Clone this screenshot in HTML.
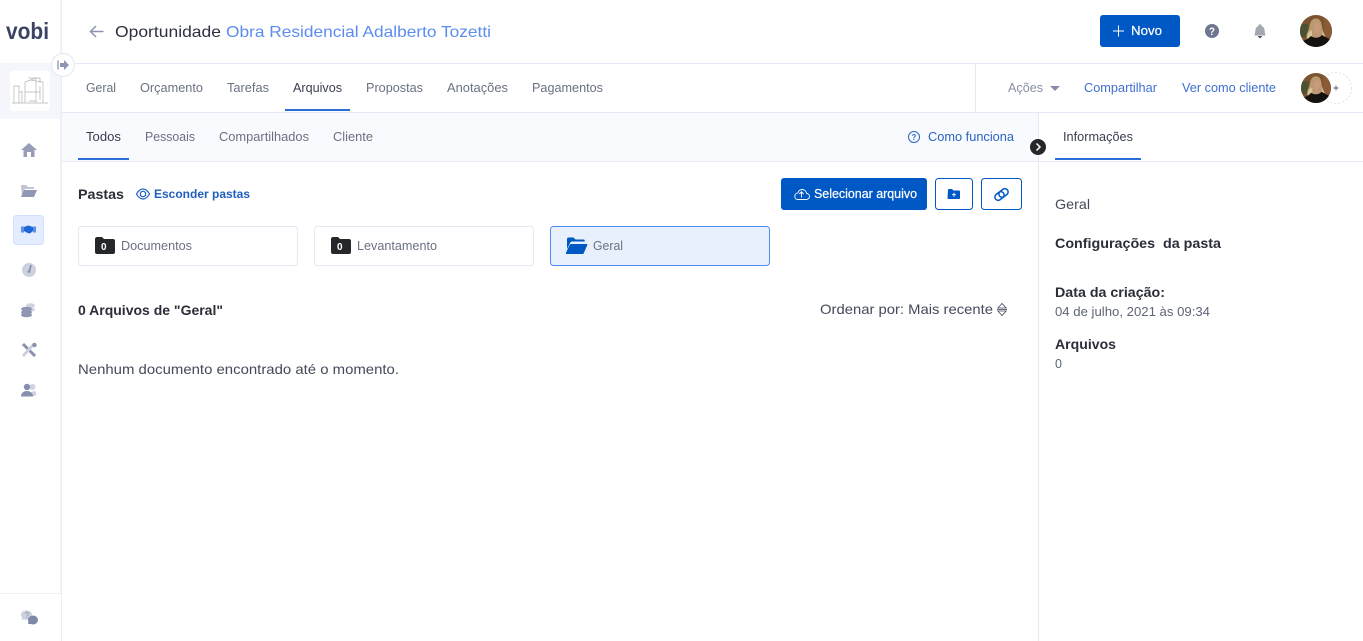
<!DOCTYPE html>
<html lang="pt-BR"><head><meta charset="utf-8"><title>Vobi</title>
<style>
html,body{margin:0;padding:0;background:#fff;width:1363px;height:641px;overflow:hidden}
svg{display:block;position:absolute;left:0;top:0}
text{font-family:"Liberation Sans",sans-serif;font-size:13px;fill:#6a7182;white-space:pre}
.b{font-weight:700;fill:#2b2d38;font-size:14px}
.a{fill:#3f6fd0}
.d{fill:#3a3f50}
.l{fill:#2a64c4}
.w{fill:#fff;stroke:#fff;stroke-width:.2px}
</style></head><body>
<svg width="1363" height="641" viewBox="0 0 1363 641" xmlns="http://www.w3.org/2000/svg" xmlns:xlink="http://www.w3.org/1999/xlink">
<defs>
<clipPath id="av"><circle cx="16" cy="16" r="16"/></clipPath>
<symbol id="avatar" viewBox="0 0 32 32">
<g clip-path="url(#av)">
<rect width="32" height="32" fill="#7b5330"/>
<rect x="0" y="9" width="8" height="13" fill="#4a5233"/>
<rect x="24" y="2" width="8" height="20" fill="#8a5b35"/>
<path d="M16 3.500c-4.500 0-6 4-6.500 8-.5 4-3.500 7-3 11 .5 3 4 4 6 2l8-1c2 2 4.500 1 4-2-.5-4-2-6-2.500-10-.5-4.500-2-8-6-8z" fill="#b99a6c"/>
<path d="M8 18c-1 3-1 5 1 7l3-1 0-9zM22 15l1 9 2-1c.5-3-1.500-5-3-8z" fill="#d8c296"/>
<ellipse cx="17" cy="12.500" rx="3.500" ry="5" fill="#c99a7e"/>
<path d="M0 25c4 2 8-1 11-4 3 2.500 8 2.500 11-1 3 2 7 4 10 5v7H0z" fill="#14110f"/>
<path d="M14.500 17h5v4c-1.500 1.500-3.500 1.500-5 0z" fill="#c2957c"/>
</g>
</symbol>
</defs>

<!-- Background panels -->
<rect x="62" y="113" width="976" height="48" fill="#f9fafd"/>
<rect x="0" y="63" width="61" height="56" fill="#f5f6fc"/>
<rect x="10" y="71" width="40" height="40" rx="3" fill="#fff"/>
<!-- Lines -->
<rect x="60" y="0" width="1" height="593" fill="#f3f4f8"/>
<rect x="61" y="0" width="1" height="641" fill="#ebedf5"/>
<rect x="62" y="63" width="1301" height="1" fill="#e4e8f4"/>
<rect x="62" y="112" width="1301" height="1" fill="#e4e8f4"/>
<rect x="975" y="64" width="1" height="48" fill="#e4e8f4"/>
<rect x="62" y="161" width="1301" height="1" fill="#e8ebf5"/>
<rect x="1038" y="113" width="1" height="528" fill="#e4e8f4"/>
<rect x="0" y="593" width="61" height="1" fill="#eeeff5"/>

<!-- Logo -->
<text x="6" y="39" textLength="43" lengthAdjust="spacingAndGlyphs" style="font-size:23px;font-weight:700;fill:#3b4463">vobi</text>

<!-- Project illustration -->
<g fill="none" stroke="#b2b5ba" stroke-width=".7">
<path d="M14 103V86h5v17M19 93l3-2v12M25 103V82l11-4v25M30 80l13 2v21M25 92h15M36 88v13H29M40 86v14M12 103h36"/>
<path d="M28 78h12v5"/>
</g>
<!-- Sidebar toggle -->
<circle cx="63" cy="65" r="11.500" fill="#fff" stroke="#e2e6f4"/>
<path d="M58 60.500v9" stroke="#8d95b0" stroke-width="1.300"/>
<path d="M60 63h4v-3l5 5-5 5v-3h-4z" fill="#8d95b0"/>

<!-- Sidebar icons -->
<path d="M21 150l8-7 8 7h-2.500v7h-3.500v-5h-4v5h-3.500v-7z" fill="#979db5"/>
<path d="M21 185h5l2 2h6v2h-9l-3 7z" fill="#c0c4d3"/>
<path d="M24 190h13l-3 7H21z" fill="#8f97b2"/>
<rect x="13.500" y="215.500" width="30" height="29" rx="3" fill="#e4edff" stroke="#d2e1ff"/>
<path d="M21 226.500h3v6h-3zM33 226.500h3v6h-3z" fill="#5d8fe8"/>
<path d="M24 227l4-1.500 2 .5 3 1v4l-3 2.500-2.500-.5-3.500-2z" fill="#1f66d6"/>
<circle cx="29" cy="270" r="7" fill="#cdd1de"/>
<path d="M29.500 271l1.500-6" stroke="#7c84a0" stroke-width="1.500"/>
<circle cx="29" cy="271.500" r="1.500" fill="#8f97b2"/>
<ellipse cx="30.500" cy="305.500" rx="4.500" ry="2.200" fill="#d0d3df"/>
<ellipse cx="30.500" cy="309.500" rx="4.500" ry="2.200" fill="#d0d3df"/>
<ellipse cx="26.500" cy="309" rx="5.500" ry="2.300" fill="#8f97b2"/>
<ellipse cx="26.500" cy="312.300" rx="5.500" ry="2.300" fill="#8f97b2"/>
<ellipse cx="26.500" cy="315" rx="5.500" ry="2.300" fill="#8f97b2"/>
<path d="M23 344l12 12" stroke="#8790ac" stroke-width="3"/>
<path d="M34 344l-11 12" stroke="#cdd1de" stroke-width="3"/>
<circle cx="34.500" cy="345" r="2.200" fill="#8790ac"/>
<circle cx="32.500" cy="387" r="3" fill="#d0d3df"/>
<path d="M30 396c0-3 2-5 5-5 1.500 1 1.500 4 .5 5z" fill="#d0d3df"/>
<circle cx="27" cy="387" r="3.200" fill="#8790ac"/>
<path d="M21 396.500c0-3.500 2.500-5.500 6-5.500s6 2 6 5.500z" fill="#8790ac"/>
<ellipse cx="26.500" cy="615" rx="5.500" ry="4.800" fill="#cdd1de"/>
<path d="M22.500 618l-1.500 2 4-1z" fill="#cdd1de"/>
<text x="24.800" y="618" style="font-size:8px;fill:#8790ac">?</text>
<ellipse cx="33" cy="620" rx="5" ry="4.500" fill="#7f88a6"/>
<path d="M29 619l-1 5h6z" fill="#7f88a6"/>

<!-- Header -->
<path d="M103.500 31.500H91M96 26l-5.500 5.500L96 37" fill="none" stroke="#8d94ae" stroke-width="1.500"/>
<text x="115" y="37" textLength="106" lengthAdjust="spacingAndGlyphs" style="font-size:16px;fill:#2c3040">Oportunidade</text>
<text x="226" y="37" textLength="265" lengthAdjust="spacingAndGlyphs" style="font-size:16px;fill:#5b8def">Obra Residencial Adalberto Tozetti</text>
<rect x="1100" y="15" width="80" height="32" rx="3" fill="#0058c4"/>
<path d="M1118.500 25.500v11M1113 31h11" stroke="#fff" stroke-width="1"/>
<text x="1131" y="35" textLength="31" lengthAdjust="spacingAndGlyphs" class="w" style="font-size:13px">Novo</text>
<circle cx="1212" cy="31" r="7" fill="#6e7790"/>
<text x="1209" y="35" textLength="6" lengthAdjust="spacingAndGlyphs" style="font-size:11px;font-weight:700;fill:#fff">?</text>
<path d="M1254 35.500c1.500-1.500 1-4 1.500-6 .4-2 1.500-3 3-3.500v-1.500h3v1.500c1.500.5 2.600 1.500 3 3.500.5 2 0 4.500 1.500 6z" fill="#a3a7af"/>
<path d="M1257.500 36h5l-2.500 2.500z" fill="#50535b"/>
<use xlink:href="#avatar" href="#avatar" x="1300" y="15" width="32" height="32"/>

<!-- Main tabs -->
<text x="86" y="92" textLength="30" lengthAdjust="spacingAndGlyphs">Geral</text>
<text x="140" y="92" textLength="63" lengthAdjust="spacingAndGlyphs">Orçamento</text>
<text x="227" y="92" textLength="42" lengthAdjust="spacingAndGlyphs">Tarefas</text>
<text x="293" y="92" textLength="49" lengthAdjust="spacingAndGlyphs" class="d">Arquivos</text>
<rect x="285" y="109" width="65" height="2" fill="#2a6fd8"/>
<text x="366" y="92" textLength="57" lengthAdjust="spacingAndGlyphs">Propostas</text>
<text x="447" y="92" textLength="61" lengthAdjust="spacingAndGlyphs">Anotações</text>
<text x="532" y="92" textLength="71" lengthAdjust="spacingAndGlyphs">Pagamentos</text>
<text x="1008" y="92" textLength="35" lengthAdjust="spacingAndGlyphs" style="fill:#8a90a3">Ações</text>
<path d="M1050 86h10l-5 5z" fill="#858dab"/>
<text x="1084" y="92" textLength="73" lengthAdjust="spacingAndGlyphs" class="a">Compartilhar</text>
<text x="1182" y="92" textLength="94" lengthAdjust="spacingAndGlyphs" class="a">Ver como cliente</text>
<circle cx="1336" cy="88" r="15.500" fill="#fff" stroke="#dfe2ea" stroke-dasharray="2 2"/>
<use xlink:href="#avatar" href="#avatar" x="1301" y="73" width="30" height="30"/>
<path d="M1336 85.500v5M1333.500 88h5" stroke="#555b6c" stroke-width=".9"/>

<!-- Sub tabs -->
<text x="86" y="141" textLength="35" lengthAdjust="spacingAndGlyphs" class="d">Todos</text>
<rect x="78" y="158" width="51" height="2" fill="#2a6fd8"/>
<text x="145" y="141" textLength="50" lengthAdjust="spacingAndGlyphs">Pessoais</text>
<text x="219" y="141" textLength="90" lengthAdjust="spacingAndGlyphs">Compartilhados</text>
<text x="333" y="141" textLength="40" lengthAdjust="spacingAndGlyphs">Cliente</text>
<circle cx="914" cy="137" r="5.500" fill="none" stroke="#2a64c4" stroke-width="1"/>
<text x="911.800" y="140" textLength="4.500" lengthAdjust="spacingAndGlyphs" style="font-size:8px;font-weight:700;fill:#2a64c4">?</text>
<text x="928" y="141" textLength="86" lengthAdjust="spacingAndGlyphs" class="l">Como funciona</text>
<circle cx="1038" cy="147" r="8" fill="#26272b"/>
<path d="M1036.500 143.500l3.500 3.500-3.500 3.500" fill="none" stroke="#fff" stroke-width="1.500"/>
<text x="1063" y="141" textLength="70" lengthAdjust="spacingAndGlyphs" class="d">Informações</text>
<rect x="1055" y="158" width="86" height="2" fill="#2a6fd8"/>

<!-- Pastas -->
<text x="78" y="199" textLength="46" lengthAdjust="spacingAndGlyphs" class="b">Pastas</text>
<path d="M136.500 194c2-3.500 4.300-5 6.500-5s4.500 1.500 6.500 5c-2 3.500-4.300 5-6.500 5s-4.500-1.500-6.500-5z" fill="none" stroke="#1f5fbf" stroke-width="1.200"/>
<circle cx="143" cy="194" r="2.700" fill="none" stroke="#1f5fbf" stroke-width="1.200"/>
<text x="154" y="198" textLength="96" lengthAdjust="spacingAndGlyphs" style="font-size:12px;font-weight:700;fill:#1f5fbf">Esconder pastas</text>
<rect x="781" y="178" width="146" height="32" rx="3" fill="#0058c4"/>
<path d="M797 199.500h9c2 0 3.500-1.300 3.500-3 0-1.600-1.200-2.800-2.800-3-.5-2.400-2.300-4-4.500-4-2 0-3.800 1.300-4.300 3.400-1.700.2-3.100 1.500-3.100 3.200 0 1.900 1 3.400 2.700 3.400z" fill="none" stroke="#fff" stroke-width=".9"/>
<path d="M801.500 197.500v-5.500M799.300 194l2.200-2.200 2.200 2.200" fill="none" stroke="#fff" stroke-width=".9"/>
<text x="814" y="198" textLength="103" lengthAdjust="spacingAndGlyphs" class="w" style="font-size:12.500px">Selecionar arquivo</text>
<rect x="935.500" y="178.500" width="37" height="31" rx="3" fill="#fff" stroke="#0058c4"/>
<path d="M948 190c0-.6.400-1 1-1h3l1.500 1.500h5.500c.6 0 1 .4 1 1v6.500c0 .6-.4 1-1 1h-10.500c-.6 0-1-.4-1-1z" fill="#0058c4"/>
<path d="M954 192.700v4M952 194.700h4" stroke="#fff" stroke-width=".9"/>
<rect x="981.500" y="178.500" width="40" height="31" rx="3" fill="#fff" stroke="#0058c4"/>
<g fill="none" stroke="#0058c4" stroke-width="1.500" transform="rotate(-38 1001.500 194.500)">
<rect x="994" y="191.200" width="10" height="6.500" rx="3.250"/>
<rect x="999" y="191.300" width="10" height="6.500" rx="3.250"/>
</g>

<!-- Folder cards -->
<rect x="78.500" y="226.500" width="219" height="39" rx="3" fill="#fff" stroke="#e4e8f4"/>
<rect x="314.500" y="226.500" width="219" height="39" rx="3" fill="#fff" stroke="#e4e8f4"/>
<rect x="550.500" y="226.500" width="219" height="39" rx="3" fill="#e9f0fd" stroke="#4f8cf0"/>
<path d="M95 239c0-1 .8-2 2-2h5l2 2h9c1.200 0 2 .8 2 2v11c0 1.200-.8 2-2 2H97c-1.200 0-2-.8-2-2z" fill="#26272b"/>
<text x="101" y="250" style="font-size:10px;font-weight:700;fill:#fff">0</text>
<text x="121" y="250" textLength="71" lengthAdjust="spacingAndGlyphs">Documentos</text>
<path d="M331 239c0-1 .8-2 2-2h5l2 2h9c1.200 0 2 .8 2 2v11c0 1.200-.8 2-2 2h-16c-1.200 0-2-.8-2-2z" fill="#26272b"/>
<text x="337" y="250" style="font-size:10px;font-weight:700;fill:#fff">0</text>
<text x="357" y="250" textLength="80" lengthAdjust="spacingAndGlyphs">Levantamento</text>
<path d="M567 239c0-.8.600-1.500 1.500-1.500h5l2 2h8c.8 0 1.300.5 1.300 1.300v.7h-12.500c-1 0-1.800.5-2.300 1.500l-3 6z" fill="#0058c4"/>
<path d="M571 244h15.500c.8 0 1 .5.700 1.200l-3.500 8c-.3.500-.7.800-1.300.8H567c-1 0-1.300-.6-1-1.300l3.500-7.700c.3-.6.800-1 1.500-1z" fill="#0058c4"/>
<text x="593" y="250" textLength="30" lengthAdjust="spacingAndGlyphs">Geral</text>

<!-- Listing -->
<text x="78" y="315" textLength="145" lengthAdjust="spacingAndGlyphs" class="b">0 Arquivos de "Geral"</text>
<text x="820" y="314" textLength="173" lengthAdjust="spacingAndGlyphs" style="font-size:14px;fill:#444a5a">Ordenar por: Mais recente</text>
<path d="M997.800 308l4.200-4.500 4.200 4.500zM997.800 311l4.200 4.500 4.200-4.500z" fill="none" stroke="#444a5a" stroke-width=".8"/>
<path d="M997 309.500h10" stroke="#444a5a" stroke-width=".8"/>
<text x="78" y="374" textLength="321" lengthAdjust="spacingAndGlyphs" style="font-size:14px;fill:#444a5a">Nenhum documento encontrado até o momento.</text>

<!-- Right panel -->
<text x="1055" y="209" textLength="35" lengthAdjust="spacingAndGlyphs" style="font-size:14px;fill:#444a5a">Geral</text>
<text x="1055" y="248" textLength="166" lengthAdjust="spacingAndGlyphs" class="b">Configurações  da pasta</text>
<text x="1055" y="297" textLength="110" lengthAdjust="spacingAndGlyphs" class="b">Data da criação:</text>
<text x="1055" y="316" textLength="155" lengthAdjust="spacingAndGlyphs" style="font-size:12.500px;fill:#5d6475">04 de julho, 2021 às 09:34</text>
<text x="1055" y="349" textLength="61" lengthAdjust="spacingAndGlyphs" class="b">Arquivos</text>
<text x="1055" y="368" style="font-size:12.500px;fill:#5d6475">0</text>
</svg>
</body></html>
